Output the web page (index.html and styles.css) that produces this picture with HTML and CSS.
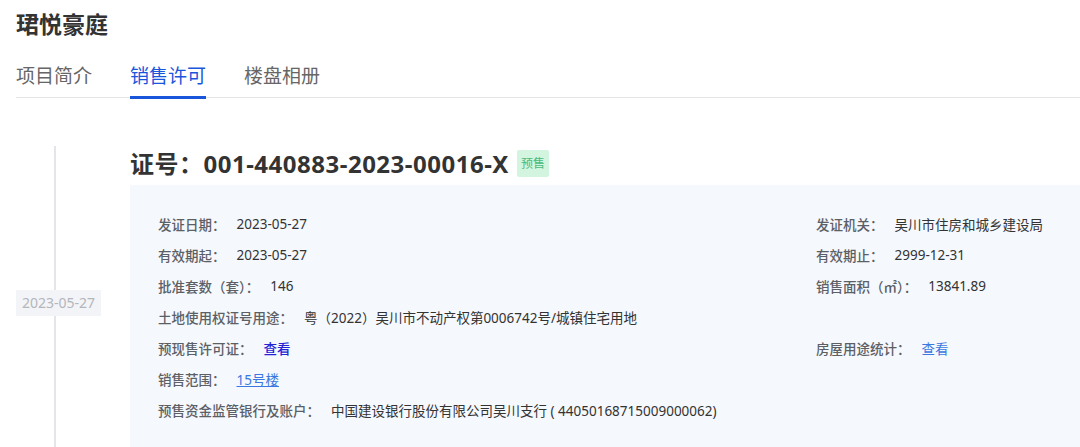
FILE: index.html
```html
<!DOCTYPE html>
<html lang="zh-CN">
<head>
<meta charset="utf-8">
<title>珺悦豪庭</title>
<link rel="stylesheet" href="styles.css">
</head>
<body>
<div class="page">
  <h1 class="title">珺悦豪庭</h1>
  <nav class="tabs">
    <span class="tab">项目简介</span>
    <span class="tab active">销售许可</span>
    <span class="tab">楼盘相册</span>
  </nav>
  <section class="record">
    <div class="rail">
      <span class="date">2023-05-27</span>
    </div>
    <div class="main">
      <div class="heading">
        <span class="cert">证号：001-440883-2023-00016-X</span>
        <span class="badge">预售</span>
      </div>
      <div class="card">
        <div class="cell"><span class="lbl">发证日期：</span><span class="val">2023-05-27</span></div>
        <div class="cell"><span class="lbl">发证机关：</span><span class="val">吴川市住房和城乡建设局</span></div>
        <div class="cell"><span class="lbl">有效期起：</span><span class="val">2023-05-27</span></div>
        <div class="cell"><span class="lbl">有效期止：</span><span class="val">2999-12-31</span></div>
        <div class="cell"><span class="lbl">批准套数（套）：</span><span class="val">146</span></div>
        <div class="cell"><span class="lbl">销售面积（㎡）：</span><span class="val">13841.89</span></div>
        <div class="cell"><span class="lbl">土地使用权证号用途：</span><span class="val">粤（2022）吴川市不动产权第0006742号/城镇住宅用地</span></div>
        <div class="cell"></div>
        <div class="cell"><span class="lbl">预现售许可证：</span><a class="link dark">查看</a></div>
        <div class="cell"><span class="lbl">房屋用途统计：</span><a class="link">查看</a></div>
        <div class="cell"><span class="lbl">销售范围：</span><a class="link underline">15号楼</a></div>
        <div class="cell"></div>
        <div class="cell"><span class="lbl">预售资金监管银行及账户：</span><span class="val">中国建设银行股份有限公司吴川支行 ( 44050168715009000062)</span></div>
        <div class="cell"></div>
      </div>
    </div>
  </section>
</div>
</body>
</html>
```
FILE: styles.css
```css
* { box-sizing: border-box; }
html, body { margin: 0; padding: 0; background: #fff; }
body {
  font-family: "Noto Sans", "Noto Sans CJK SC", sans-serif;
  color: #333;
  overflow: hidden;
}
.page {
  padding: 8px 0 0 16px;
}
.title {
  margin: 0;
  font-size: 23px;
  line-height: 32px;
  font-weight: 700;
  color: #333;
}
.tabs {
  display: flex;
  gap: 38px;
  margin-top: 23px;
  border-bottom: 1px solid #e6e6e6;
}
.tab {
  font-size: 19px;
  line-height: 26px;
  color: #666;
  padding-bottom: 7px;
  border-bottom: 3px solid transparent;
  margin-bottom: -2px;
}
.tab.active {
  color: #1a56db;
  border-bottom-color: #1a56db;
}
.record {
  display: flex;
  margin-top: 48px;
}
.rail {
  width: 114px;
  flex: none;
  display: flex;
  align-items: center;
  background: linear-gradient(#e3e5ea, #e3e5ea) no-repeat 38px 0 / 2px 100%;
}
.date {
  width: 85px;
  height: 26px;
  line-height: 26px;
  text-align: center;
  background: #f3f4f7;
  color: #b3b6bb;
  font-size: 14px;
}
.main {
  flex: 1;
  padding-top: 4px;
}
.heading {
  display: flex;
  align-items: center;
  gap: 8px;
  height: 27px;
}
.cert {
  font-size: 24px;
  font-weight: 700;
  letter-spacing: 0.5px;
  color: #333;
  line-height: 27px;
}
.badge {
  height: 27px;
  line-height: 27px;
  padding: 0 4px;
  font-size: 12px;
  color: #4cb97c;
  background: #d3f5e0;
  border-radius: 2px;
}
.card {
  margin-top: 8px;
  background: #f5f8fc;
  padding: 23px 0 34px 28px;
  display: grid;
  grid-template-columns: 658px 1fr;
  grid-auto-rows: 31px;
}
.cell {
  display: flex;
  align-items: center;
  gap: 11px;
  font-size: 13.5px;
  white-space: nowrap;
}
.lbl { color: #5c5f66; font-weight: 500; }
.val { color: #333; }
.link { color: #3a78e0; cursor: pointer; }
.link.dark { color: #2424d6; font-weight: 500; }
.link.underline { text-decoration: underline; }
```
